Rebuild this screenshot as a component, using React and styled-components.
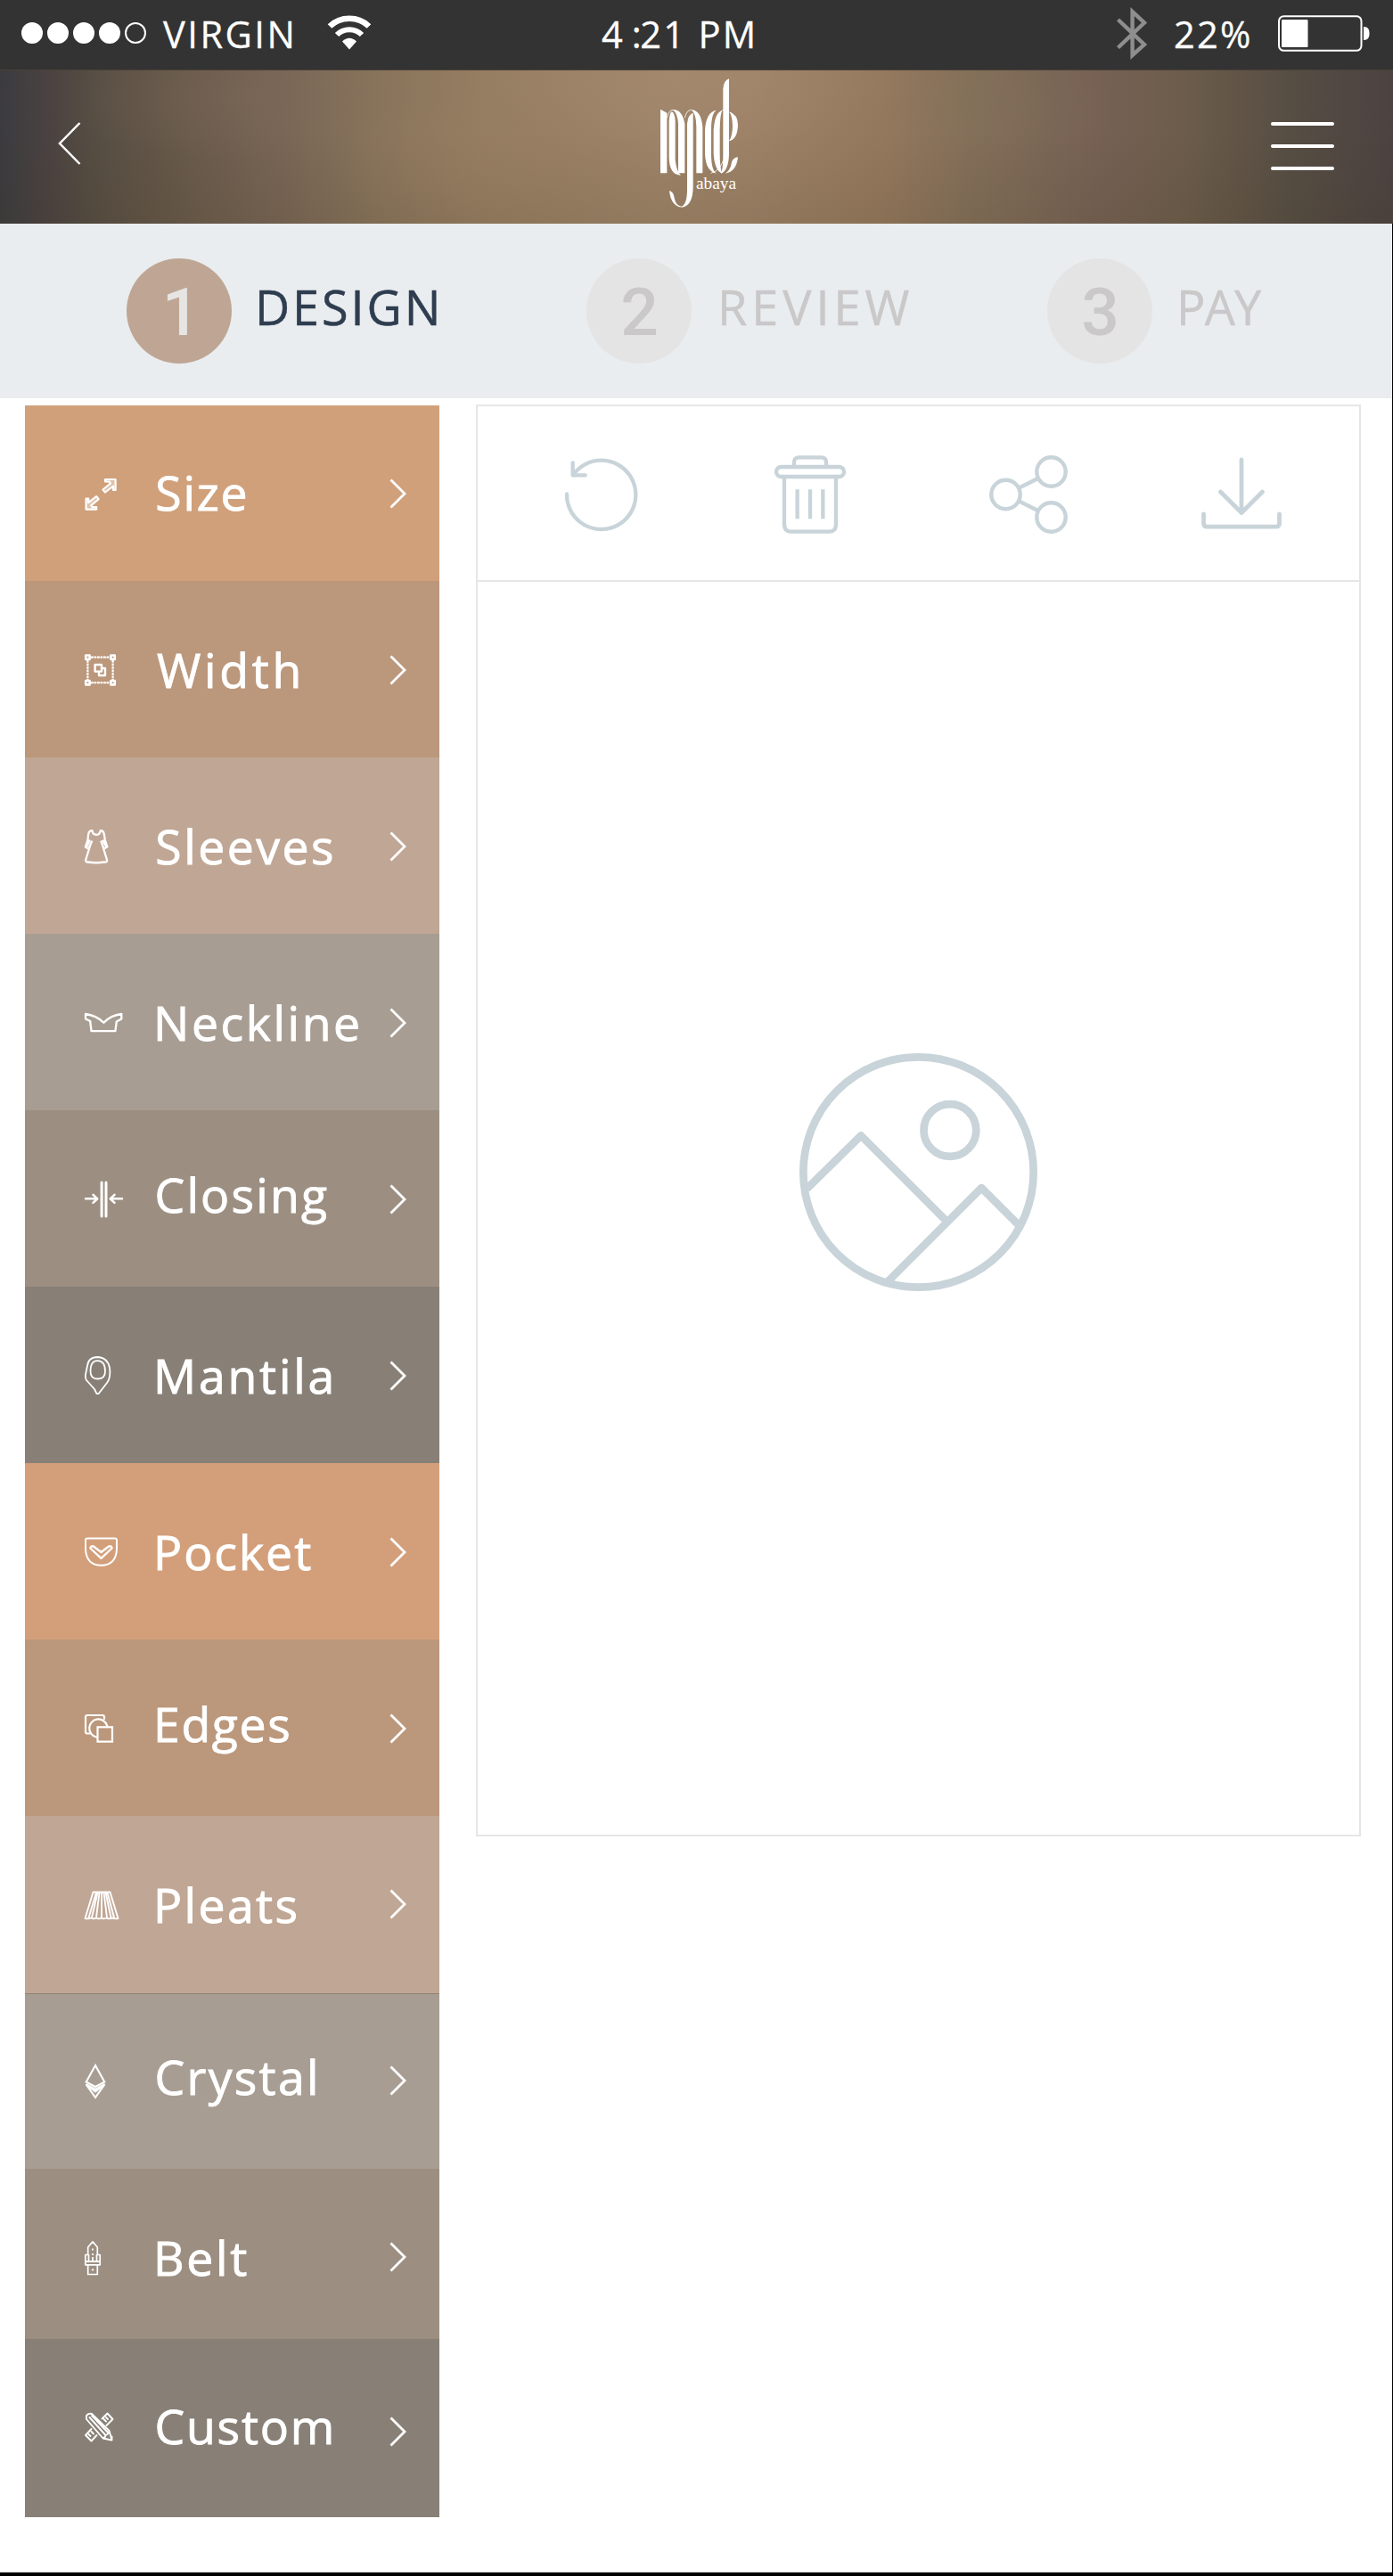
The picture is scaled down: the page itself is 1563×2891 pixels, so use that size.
import React from "react";
import styled, { createGlobalStyle } from "styled-components";

const TEXT_FONT = '"Open Sans", "Noto Sans", sans-serif';
const LINE = "#c8d4d9";

const GlobalStyle = createGlobalStyle`
  *, *::before, *::after { box-sizing: border-box; }
  body { margin: 0; background: #ffffff; font-family: ${TEXT_FONT}; }
  svg { display: block; flex: none; overflow: visible; }
`;

const Screen = styled.div`
  display: flex;
  flex-direction: column;
  width: 1563px;
  height: 2891px;
  overflow: hidden;
`;

/* ---------- status bar ---------- */

const StatusBar = styled.div`
  display: flex;
  align-items: center;
  height: 79px;
  padding: 0 25px 4px 24px;
  background: #333333;
  border-bottom: 1px solid #4a4038;
  color: #ffffff;
`;

const Dots = styled.div`
  display: flex;
  gap: 5px;
  width: 160px;
`;

const Dot = styled.span`
  width: 24px;
  height: 24px;
  border-radius: 50%;
  border: 2px solid #ffffff;
  background: ${(p) => (p.$filled ? "#ffffff" : "transparent")};
`;

const StatusText = styled.span`
  display: block;
  flex: none;
  width: ${(p) => p.$width}px;
  padding-top: 2px;
  font-size: 41.6px;
  line-height: 56px;
  letter-spacing: ${(p) => p.$tracking}px;
  white-space: pre;
  -webkit-text-stroke: 0.3px currentColor;
`;

const Hour = styled.span`
  word-spacing: -5.5px;
`;

const Colon = styled.span`
  margin-right: -1.5px;
  letter-spacing: 0;
`;

const StatusIcon = styled.div`
  flex: none;
  margin-left: ${(p) => p.$gap}px;
`;

/* ---------- header ---------- */

const Header = styled.header`
  display: flex;
  align-items: center;
  justify-content: space-between;
  height: 172px;
  padding: 0 66px 0 65px;
  background:
    radial-gradient(ellipse 200px 70px at 265px 30px, rgba(128, 108, 92, 0.3), transparent),
    radial-gradient(ellipse 260px 70px at 780px 10px, rgba(170, 142, 116, 0.4), transparent),
    radial-gradient(ellipse 160px 80px at 530px 110px, rgba(158, 128, 100, 0.2), transparent),
    radial-gradient(ellipse 180px 60px at 1080px 40px, rgba(134, 118, 92, 0.2), transparent),
    linear-gradient(180deg, rgba(0, 0, 0, 0) 40%, rgba(60, 48, 24, 0.12) 100%),
    linear-gradient(90deg, #3b3b3f 0, #4b4341 58px, #574e43 110px, #695a4b 210px, #796656 320px,
      #88745b 420px, #957d61 540px, #9e8469 740px, #9d8267 840px, #94785d 990px, #836f59 1090px,
      #766154 1230px, #6c5c4b 1330px, #564d43 1450px, #4c4241 1562px);
`;

const HeaderButton = styled.button`
  display: flex;
  padding: 0;
  border: 0;
  background: none;
`;

const BackButton = styled(HeaderButton)`
  margin-top: -8px;
`;

const Hamburger = styled(HeaderButton)`
  flex-direction: column;
  gap: 21px;
  margin-top: -2px;
`;

const HamburgerLine = styled.span`
  width: 71px;
  height: 4px;
  border-radius: 2px;
  background: #ffffff;
`;

const LogoSlot = styled.div`
  margin: -8px 0 0 52px;
`;

/* ---------- steps ---------- */

const Content = styled.div`
  display: flex;
  flex-direction: column;
  flex: 1;
  border-right: 1px solid #000000;
  border-bottom: 4px solid #000000;
  background: #ffffff;
`;

const Steps = styled.nav`
  display: flex;
  align-items: center;
  height: 196px;
  padding-left: 142px;
  background: #e9edef;
`;

const Step = styled.div`
  display: flex;
  align-items: center;
  flex: none;
  width: ${(p) => p.$width}px;
`;

const StepNumber = styled.span`
  display: flex;
  align-items: center;
  justify-content: center;
  flex: none;
  width: 118px;
  height: 118px;
  padding: 2px 0 0 ${(p) => (p.$active ? 4 : 1)}px;
  border-radius: 50%;
  background: ${(p) => (p.$active ? "#bfa694" : "#e4e4e4")};
  color: ${(p) => (p.$active ? "#e6e5e4" : "#cac8c9")};
  font: 500 75px/75px Roboto, "Liberation Sans", sans-serif;
`;

const StepLabel = styled.span`
  margin: -11px 0 0 ${(p) => p.$gap}px;
  color: ${(p) => (p.$active ? "#2f3d50" : "#cac8c9")};
  font-size: 54px;
  line-height: 74px;
  letter-spacing: ${(p) => p.$tracking}px;
  -webkit-text-stroke: 0.5px currentColor;
`;

/* ---------- designer ---------- */

const Designer = styled.main`
  display: flex;
  align-items: flex-start;
  gap: 41px;
  padding: 8px 0 0 28px;
`;

const Menu = styled.ul`
  width: 465px;
  margin: 0;
  padding: 0;
  list-style: none;
`;

const MenuRow = styled.li`
  display: flex;
  align-items: center;
  height: ${(p) => p.$height}px;
  padding: 0 37px 0 66px;
  background: ${(p) => p.$color};
  box-shadow: ${(p) => (p.$ruled ? "inset 0 1px 0 #8a8075" : "none")};
  color: #ffffff;
`;

const MenuLabel = styled.span`
  flex: 1;
  margin: ${(p) => p.$shift * 2 + 1}px 0 0 ${(p) => 38.5 - p.$bearing}px;
  font-size: 53.5px;
  line-height: 74px;
  letter-spacing: ${(p) => p.$tracking}px;
  white-space: nowrap;
  -webkit-text-stroke: 0.9px currentColor;
`;

const Chevron = styled.svg`
  margin-top: ${(p) => p.$shift * 2 + 1}px;
`;

const Preview = styled.section`
  width: 993px;
  height: 1607px;
  margin-top: -1px;
  border: 2px solid #e6e6e6;
`;

const Toolbar = styled.div`
  display: flex;
  align-items: center;
  height: 197px;
  border-bottom: 2px solid #e6e6e6;
`;

const Tool = styled.button`
  display: flex;
  margin: 2px 0 0 ${(p) => p.$gap}px;
  padding: 0;
  border: 0;
  background: none;
`;

const Canvas = styled.div`
  display: flex;
  justify-content: center;
  padding: 529px 1px 0 0;
`;

/* ---------- drawings ---------- */

const WifiIcon = () => (
  <svg width="50" height="40" viewBox="0 0 50 40" fill="none" stroke="#fff">
    <path d="M3 12.5C15 .8 35 .8 47 12.5" strokeWidth="6.6" />
    <path d="M11 22C18.500 14.200 31.500 14.200 39 22" strokeWidth="6" />
    <path d="M17 29.500Q25 22 33 29.500L25 38.500Z" fill="#fff" stroke="none" />
  </svg>
);

const BluetoothIcon = () => (
  <svg width="34" height="57" viewBox="0 0 34 57" fill="none" stroke="#8e8e8e" strokeWidth="4.400">
    <path d="M1.500 13L31 41L17.600 53V4L31 16.500L1.500 44.500" />
  </svg>
);

const BatteryIcon = () => (
  <svg width="104" height="41" viewBox="0 0 104 41" fill="#fff">
    <rect x="1" y="1.200" width="92.500" height="38.600" rx="5.500" fill="none" stroke="#fff" strokeWidth="2" />
    <rect x="4" y="5" width="29.500" height="31" rx="1" />
    <path d="M96 13C101 13 102.500 16 102.500 20.500S101 28 96 28Z" />
  </svg>
);

const Logo = () => (
  <svg width="90" height="148" viewBox="59 24 270 444" fill="#fff">
    <path d="M62 131L84 143V346H62Z" />
    <path d="M84 160Q90 134 104 133Q118 134 123 158M144 160Q150 134 165 133M232 346Q262 340 275 300M293 142Q284 132 270 134" fill="none" stroke="#fff" strokeWidth="2.500" />
    <path d="M91 172Q93 140 101 139Q110 143 112 170V300Q116 342 131 353Q91 352 91 290Z" />
    <path d="M104 133Q136 130 144 180V346H122V180Q120 145 104 133Z" />
    <path d="M152 180Q155 148 172 143V390Q172 456 134 461Q98 458 92 405Q106 408 109 430Q114 456 134 458Q152 450 152 400Z" />
    <path d="M165 133Q198 132 204 190V346H183V190Q183 145 165 133Z" />
    <path d="M250 134Q216 140 212 200V280Q214 340 250 347Q233 335 233 280V200Q233 145 250 134Z" />
    <path d="M270 134Q245 142 241 200V280Q244 335 268 347Q292 335 293 280V28Q275 34 273 62V285Q273 325 268 341Q262 320 262 280V200Q263 148 270 134Z" />
    <path d="M293 139Q323 148 323 185Q321 232 293 238Q305 220 305 185Q304 152 293 139Z" />
    <path d="M323 292Q318 341 281 347Q299 334 302 308Q307 294 323 292Z" />
    <text x="182" y="400" fontSize="56" textLength="135" lengthAdjust="spacingAndGlyphs" fontFamily='"Liberation Serif", serif'>
      abaya
    </text>
  </svg>
);

const MenuGlyph = ({ children }) => (
  <svg width="44" height="44" viewBox="0 0 44 44" fill="none" stroke="#fff" strokeWidth="2.200" strokeLinejoin="round" strokeLinecap="round">
    {children}
  </svg>
);

const ARROW = "M24 6H35.600V18H33V13.500L24 20.500L21.500 17.500L30 10.500L28.500 8.500H24Z";

const glyphs = {
  size: (
    <>
      <path d={ARROW} fill="rgba(255,255,255,.35)" />
      <path d={ARROW} fill="rgba(255,255,255,.35)" transform="rotate(180 19.100 22.800)" />
    </>
  ),
  width: (
    <>
      <path d="M8 8.700H29M8 37.200H29M4.400 12V34M32.600 12V34" strokeDasharray="2.800 .700" strokeLinecap="butt" />
      {[4.4, 32.6].map((x) =>
        [8.7, 37.2].map((y) => <rect key={`${x}-${y}`} x={x - 2.2} y={y - 2.2} width="4.400" height="4.400" strokeWidth="2.600" />)
      )}
      <rect x="12.600" y="17" width="7.400" height="7.600" strokeWidth="2.400" />
      <path d="M20 21H24V29H17V25" strokeWidth="2.400" />
    </>
  ),
  sleeves: (
    <path
      strokeWidth="2.300"
      d="M9 17.500L5.200 25.500L1.800 23.500L4.500 15.500L5.200 9Q6 5 9.500 5.200Q10 9.800 14 9.800T18.800 5.200Q22 5 22.800 9L23.800 15.500L26.400 23.500L22.500 25.500L19.500 17.500M7.500 21L2.200 38Q2 41 5 40.500Q14 42 23 40.500Q26.500 41 26 38L20.500 20M3.800 22L6.600 16.500M24.500 22L21.600 16.500"
    />
  ),
  neckline: (
    <path strokeWidth="2.300" d="M2 13Q14 14.500 22.400 22.800Q30 14.500 42.300 13V18.500L36.800 21.500L35.400 32.200H8.500L7.200 21L2 18.500Z" />
  ),
  closing: (
    <>
      <path d="M20.100 4V42M25 4V42" strokeWidth="3" />
      <path d="M2 22.300H15M10.500 17.800L15.300 22.300L10.500 26.800M43 22.300H30M34.500 17.800L29.700 22.300L34.500 26.800" strokeWidth="2.500" />
    </>
  ),
  mantila: (
    <>
      <path
        strokeWidth="1.800"
        d="M4 12Q5 2 16 2Q27 3 29 14Q30.500 25 26 31L16.500 43.200H14.500L12 38L3 28Q1 25 2.500 19Z"
      />
      <path strokeWidth="1.800" d="M7.500 18Q7.500 6 15.700 6.200T24 18Q24 26.500 15.700 26.500T7.500 18Z" />
    </>
  ),
  pocket: (
    <>
      <path strokeWidth="2" d="M4 7.500H35Q37 7.500 37 9.500V20Q36 37.500 19.500 37.800Q3 37.500 2 20V9.500Q2 7.500 4 7.500Z" />
      <path strokeWidth="2.300" d="M11 16.500L19.500 23L28 16.500Q31 15.500 31.600 18.500L19.500 29.800L7.300 18.500Q8 15.500 11 16.500Z" />
    </>
  ),
  edges: (
    <>
      <path d="M6.500 28.500H4Q2 28.500 2 26.500V10Q2 8 4 8H21Q23 8 23 10V12" />
      <path d="M14 32.500A10.200 10.200 0 1 1 26.300 20" />
      <rect x="15.500" y="21.300" width="16.500" height="16.300" strokeLinejoin="miter" />
    </>
  ),
  pleats: (
    <path
      strokeWidth="1.900"
      d="M10.500 7.500H29.500L38.500 37Q35 38 32 36.500Q28 38 25.500 36.500Q22 38 19.500 36.500Q17 38 14 36.500Q11 38 7.500 36.500Q5 38 1.500 37ZM14 8L5.500 36M15.500 8L9 36M17.500 8L14 36M20 8V36M22.500 8L26 36M24.500 8L30.500 36M26.500 8L34 36"
    />
  ),
  crystal: (
    <path strokeWidth="2.100" strokeLinejoin="miter" d="M13 4L2.700 22.500L13 28L23.300 22.500ZM2.500 25.200L13 31L23.500 25.200L13 40ZM7.500 29L13 33.500L18.500 29" />
  ),
  belt: (
    <>
      <path strokeWidth="1.700" d="M4.700 22.500V14L10 7.800L15.300 14V22.500M1.800 22.500H5.500V30H14.500V22.500H18.200V33.800H1.800ZM4.700 34V44.500H15.300V34" />
      <path strokeWidth="1.800" strokeLinecap="butt" d="M10 15.500V17.500M10 21V23M10 25V31M8.800 39.300H11.200M2 30H18" />
    </>
  ),
  custom: (
    <>
      <path strokeWidth="1.900" d="M20.500 11.500L26.500 5.500L32.500 12L25.500 19M14.500 30L8.500 36.500L2 30L8.500 23M25 10L27 12M22.500 12L25 14.500M5.500 29L7.500 31M8.500 26L11 28.500" />
      <path strokeWidth="1.900" d="M3 12V8Q5 5 9 6L28.500 25L31.500 35.500L21.500 33.500L3 12ZM6.500 10L24.500 30M9 8L27 27M28 35H31.500V31.500M21.500 33Q24 33 24.500 30Q28 29 28.500 25" />
    </>
  ),
};

const RefreshIcon = () => (
  <svg width="82" height="82" viewBox="42 72 246 246" fill="none" stroke={LINE} strokeWidth="13" strokeLinecap="round" strokeLinejoin="round">
    <path d="M48 193A116 116 0 1 0 70 128" />
    <path d="M68 88V130H110" />
  </svg>
);

const TrashIcon = () => (
  <svg width="80" height="88" viewBox="748 63 240 264" fill="none" stroke={LINE} strokeWidth="13">
    <path d="M814 98V86Q814 70 830 70H906Q922 70 922 86V98" />
    <rect x="754" y="102" width="228" height="33" rx="16.500" />
    <path d="M781 140V296Q781 320 805 320H931Q955 320 955 296V140M825 178V277M868 178V277M911 178V277" />
  </svg>
);

const ShareIcon = () => (
  <svg width="88" height="88" viewBox="0 0 88 88" fill="none" stroke={LINE} strokeWidth="4.400">
    <circle cx="69.500" cy="18.500" r="16.200" />
    <circle cx="18.500" cy="44" r="16.200" />
    <circle cx="69.500" cy="69.500" r="16.200" />
    <path d="M33 36.700L55 25.700M33 51.300L55 62.300" />
  </svg>
);

const DownloadIcon = () => (
  <svg width="90" height="88" viewBox="0 0 90 88" fill="none" stroke={LINE} strokeWidth="4.800" strokeLinecap="round" strokeLinejoin="round">
    <path d="M45 5V64M21.500 41L45 64.500L68.500 41M2.500 66V76Q2.500 80.200 6.500 80.200H83.500Q87.500 80.200 87.500 76V66" />
  </svg>
);

const PictureIcon = () => (
  <svg width="267" height="267" viewBox="111 124 800 800" fill="none" stroke={LINE} strokeWidth="26" strokeLinejoin="round">
    <circle cx="511" cy="524" r="387" />
    <circle cx="617" cy="383" r="88" />
    <path d="M136 580L318 401L603 686M408 892L723 577L848 702" />
  </svg>
);

/* ---------- data ---------- */

const steps = [
  { n: 1, label: "DESIGN", active: true, width: 516, gap: 26, tracking: 2.9 },
  { n: 2, label: "REVIEW", width: 517, gap: 29, tracking: 5 },
  { n: 3, label: "PAY", width: 300, gap: 27, tracking: -0.8 },
];

const menu = [
  { icon: "size", label: "Size", color: "#d0a07b", height: 197, shift: -1, bearing: 2.2, tracking: 1.8 },
  { icon: "width", label: "Width", color: "#bb977b", height: 198, shift: 0.5, bearing: 0.5, tracking: 3.7 },
  { icon: "sleeves", label: "Sleeves", color: "#c0a694", height: 198, shift: 0.5, bearing: 2.2, tracking: 2.5 },
  { icon: "neckline", label: "Neckline", color: "#a79d92", height: 198, shift: 0.5, bearing: 4.5, tracking: 2.6 },
  { icon: "closing", label: "Closing", color: "#9c8f82", height: 198, shift: -4.5, bearing: 3, tracking: 2.2 },
  { icon: "mantila", label: "Mantila", color: "#888076", height: 198, shift: 0.5, bearing: 4.5, tracking: 2.8 },
  { icon: "pocket", label: "Pocket", color: "#d39f7a", height: 198, shift: 0.5, bearing: 4.5, tracking: 2 },
  { icon: "edges", label: "Edges", color: "#bb977b", height: 198, shift: -4.5, bearing: 4.5, tracking: 1.7 },
  { icon: "pleats", label: "Pleats", color: "#c0a694", height: 199, shift: -0.5, bearing: 4.5, tracking: 2.4, chevronShift: -1 },
  { icon: "crystal", label: "Crystal", color: "#a79d92", height: 197, shift: -5, bearing: 3, tracking: 2.3, chevronShift: -1, ruled: true },
  { icon: "belt", label: "Belt", color: "#9c8f82", height: 191, shift: 3.5, bearing: 4.5, tracking: 2.7, chevronShift: 3 },
  { icon: "custom", label: "Custom", color: "#888076", height: 200, shift: -2.5, bearing: 3, tracking: 1.8, chevronShift: 3.5 },
];

const tools = [
  { name: "Reset", Icon: RefreshIcon, gap: 98 },
  { name: "Delete", Icon: TrashIcon, gap: 153 },
  { name: "Share", Icon: ShareIcon, gap: 161 },
  { name: "Download", Icon: DownloadIcon, gap: 150 },
];

export default function App() {
  return (
    <Screen>
      <GlobalStyle />
      <StatusBar>
        <Dots>
          {[true, true, true, true, false].map((filled, i) => (
            <Dot key={i} $filled={filled} />
          ))}
        </Dots>
        <StatusText $width={184} $tracking={2.5}>VIRGIN</StatusText>
        <StatusIcon $gap={0}>
          <WifiIcon />
        </StatusIcon>
        <StatusIcon $gap={258}>
          <StatusText $width={180} $tracking={2.3}>
            <Hour>4 </Hour><Colon>:</Colon>21 PM
          </StatusText>
        </StatusIcon>
        <StatusIcon $gap={398}>
          <BluetoothIcon />
        </StatusIcon>
        <StatusIcon $gap={30}>
          <StatusText $width={117} $tracking={2.2}>22%</StatusText>
        </StatusIcon>
        <StatusIcon $gap={0}>
          <BatteryIcon />
        </StatusIcon>
      </StatusBar>

      <Header>
        <BackButton aria-label="Back">
          <svg width="26" height="48" viewBox="0 0 26 48" fill="none" stroke="#fff" strokeWidth="2.500">
            <path d="M24.500 1L2 24L24.500 47" />
          </svg>
        </BackButton>
        <LogoSlot>
          <Logo />
        </LogoSlot>
        <Hamburger aria-label="Menu">
          <HamburgerLine />
          <HamburgerLine />
          <HamburgerLine />
        </Hamburger>
      </Header>

      <Content>
        <Steps>
          {steps.map((s) => (
            <Step key={s.n} $width={s.width}>
              <StepNumber $active={s.active}>{s.n}</StepNumber>
              <StepLabel $active={s.active} $gap={s.gap} $tracking={s.tracking}>
                {s.label}
              </StepLabel>
            </Step>
          ))}
        </Steps>

        <Designer>
          <Menu>
            {menu.map((m) => (
              <MenuRow key={m.label} $height={m.height} $color={m.color} $ruled={m.ruled}>
                <MenuGlyph>{glyphs[m.icon]}</MenuGlyph>
                <MenuLabel $shift={m.shift} $bearing={m.bearing} $tracking={m.tracking}>
                  {m.label}
                </MenuLabel>
                <Chevron $shift={m.chevronShift || 0} width="19" height="34" viewBox="0 0 19 34" fill="none" stroke="#fff" strokeWidth="2.800">
                  <path d="M1.500 1.500L17 17L1.500 32.500" />
                </Chevron>
              </MenuRow>
            ))}
          </Menu>

          <Preview>
            <Toolbar>
              {tools.map(({ name, Icon, gap }) => (
                <Tool key={name} aria-label={name} $gap={gap}>
                  <Icon />
                </Tool>
              ))}
            </Toolbar>
            <Canvas>
              <PictureIcon />
            </Canvas>
          </Preview>
        </Designer>
      </Content>
    </Screen>
  );
}
